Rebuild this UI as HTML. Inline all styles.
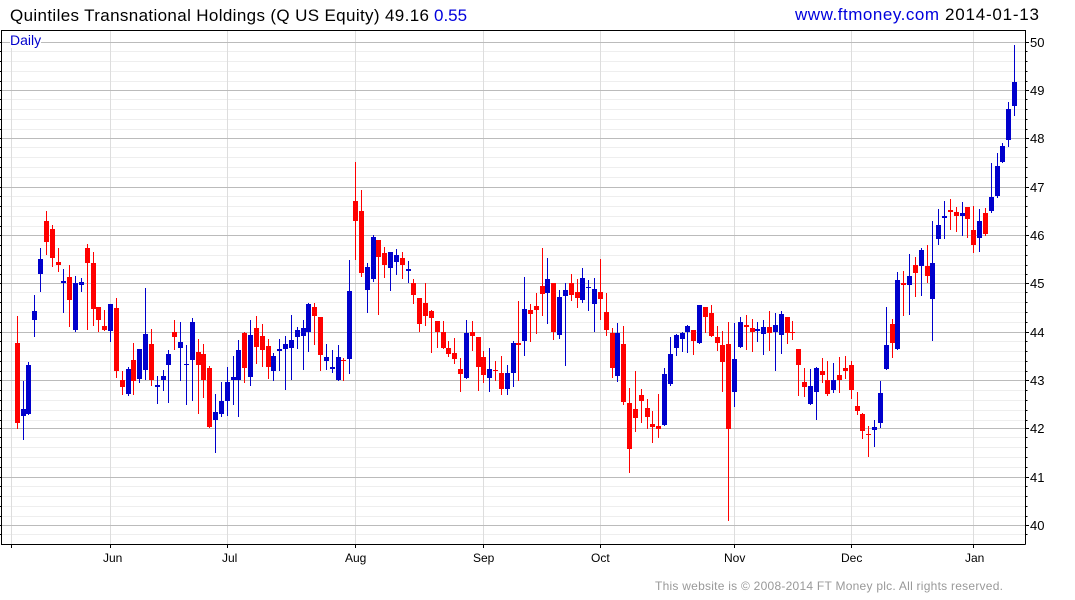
<!DOCTYPE html>
<html>
<head>
<meta charset="utf-8">
<title>Quintiles Transnational Holdings</title>
<style>
html,body{margin:0;padding:0;background:#fff;width:1075px;height:600px;overflow:hidden}
svg{display:block}
text{font-family:"Liberation Sans",Arial,sans-serif;white-space:pre}
.c{shape-rendering:crispEdges;fill:none}
.rw{stroke:#f00;stroke-width:3}
.rb{stroke:#f00;stroke-width:15}
.bw{stroke:#00c;stroke-width:3}
.bb{stroke:#00c;stroke-width:15}
</style>
</head>
<body>
<svg width="1075" height="600" viewBox="0 0 1075 600" xmlns="http://www.w3.org/2000/svg">
<g class="c" stroke-width="1">
<path stroke="#eeeeee" d="M2 51.5H1025M2 61.5H1025M2 71.5H1025M2 81.5H1025M2 99.5H1025M2 109.5H1025M2 119.5H1025M2 129.5H1025M2 147.5H1025M2 157.5H1025M2 167.5H1025M2 177.5H1025M2 196.5H1025M2 206.5H1025M2 216.5H1025M2 226.5H1025M2 245.5H1025M2 255.5H1025M2 265.5H1025M2 274.5H1025M2 292.5H1025M2 302.5H1025M2 312.5H1025M2 322.5H1025M2 341.5H1025M2 351.5H1025M2 361.5H1025M2 371.5H1025M2 390.5H1025M2 400.5H1025M2 410.5H1025M2 420.5H1025M2 437.5H1025M2 447.5H1025M2 457.5H1025M2 467.5H1025M2 486.5H1025M2 496.5H1025M2 506.5H1025M2 516.5H1025M2 534.5H1025"/>
<path stroke="#dddddd" d="M11.5 31V544M110.5 31V544M227.5 31V544M355.5 31V544M483.5 31V544M600.5 31V544M734.5 31V544M851.5 31V544M973.5 31V544"/>
<path stroke="#bbbbbb" d="M2 42.5H1025M2 90.5H1025M2 138.5H1025M2 187.5H1025M2 235.5H1025M2 283.5H1025M2 332.5H1025M2 380.5H1025M2 428.5H1025M2 477.5H1025M2 525.5H1025"/>
</g>
<rect x="10" y="31" width="31" height="17" fill="#fff"/>
<rect x="2" y="31" width="8" height="17" fill="#fff"/>
<path class="c" stroke="#bbbbbb" d="M2 42.5H10"/>

<g transform="translate(0,200) scale(0.33333)">
<path class="c rw" d="M52 348V687M208 195V381M139 33V165M157 75V201M175 144V216M262 132V390M280 156V378M295 321V396M313 330V393M349 294V534M367 513V585M400 429V585M454 387V558M523 360V450M595 417V642M610 432V594M628 498V684"/>
<path class="c rb" d="M52 429V669M208 231V300M139 63V126M157 87V174M175 186V195M262 144V189M280 189V327M295 321V360M313 378V390M349 324V513M367 540V561M400 480V543M454 432V540M523 396V411M595 456V495M610 462V540M628 504V681"/>
<path class="c bw" d="M70 543V720M85 486V645M103 285V411M121 144V276M190 207V339M226 228V396M244 234V276M331 312V426M385 501V588M418 447V549M436 264V540M472 528V612M490 510V573M505 450V609M541 366V543M559 435V615M577 354V603M646 582V759M664 546V651M682 501V648M700 468V615M715 420V651"/>
<path class="c bb" d="M70 627V648M85 495V642M103 333V360M121 177V222M190 243V249M226 249V390M244 246V255M331 312V393M385 507V582M418 447V537M436 402V510M472 555V561M490 528V540M505 462V495M541 426V444M559 492V495M577 366V480M646 636V660M664 603V642M682 546V603M700 531V540M715 450V540"/>
</g>

<g transform="translate(240,150) scale(0.33333)">
<path class="c rw" d="M13 546V699M49 498V642M67 522V651M85 567V687M223 459V585M241 501V663M310 624V693M346 36V330M364 120V381M415 270V495M433 291V384M487 306V387M520 387V462M538 444V546M556 399V528M574 480V609M592 513V594M610 513V597M625 573V621M643 564V642M661 624V726M697 513V603M715 561V723"/>
<path class="c rb" d="M13 549V654M49 534V591M67 558V600M85 588V651M223 471V498M241 501V615M310 630V633M346 153V213M364 183V369M415 270V321M433 309V345M487 324V345M520 399V435M538 444V522M556 459V498M574 483V504M592 513V546M610 546V594M625 594V612M643 609V627M661 657V672M697 546V558M715 561V651"/>
<path class="c bw" d="M31 510V708M100 609V693M118 567V663M136 558V720M154 495V690M172 531V597M190 510V660M205 459V606M259 582V660M277 600V669M295 585V693M328 330V672M382 339V489M400 255V396M451 306V423M469 297V375M505 333V399M679 510V687"/>
<path class="c bb" d="M31 555V681M100 618V663M118 597V603M136 582V597M154 570V594M172 540V561M190 534V558M205 462V546M259 621V633M277 651V657M295 621V690M328 423V627M382 351V420M400 261V387M451 306V354M469 315V336M505 357V363M679 549V684"/>
</g>

<g transform="translate(480,240) scale(0.33333)">
<path class="c rw" d="M10 333V429M46 363V423M64 348V465M115 183V423M151 192V306M169 159V282M187 24V228M220 129V300M274 102V183M292 117V204M361 57V240M379 159V288M397 264V414M430 258V495M448 444V699M466 393V576M484 447V549M502 477V567M517 513V609M535 462V594M640 270V345M676 201V279M694 195V291M712 258V333"/>
<path class="c rb" d="M10 351V405M46 390V393M64 399V447M115 309V315M151 210V222M169 198V210M187 138V162M220 129V276M274 129V165M292 156V174M361 156V177M379 216V270M397 279V384M430 312V486M448 489V627M466 507V534M484 465V483M502 504V531M517 552V561M535 558V567M640 270V303M676 201V231M694 219V288M712 291V309"/>
<path class="c bw" d="M28 324V456M82 375V465M100 303V441M133 111V348M202 54V252M238 150V297M256 129V378M307 84V189M325 120V213M343 114V276M412 249V426M553 384V558M571 291V438M589 282V348M607 276V336M622 255V339M658 195V312"/>
<path class="c bb" d="M28 387V414M82 399V447M100 309V399M133 207V303M202 117V159M238 171V285M256 150V168M307 114V180M325 141V144M343 147V192M412 279V408M553 402V555M571 342V432M589 285V324M607 279V297M622 258V276M658 195V309"/>
</g>

<g transform="translate(700,290) scale(0.33333)">
<path class="c rw" d="M67 123V306M85 96V693M139 75V180M157 87V186M208 63V183M262 81V162M277 93V150M295 177V318M313 234V321M367 204V279M382 213V318M418 201V309M436 198V267M454 213V327M472 306V375M487 369V447M505 408V501"/>
<path class="c rb" d="M67 165V216M85 162V417M139 105V111M157 114V126M208 111V129M262 81V129M277 126V129M295 177V225M313 276V291M367 243V255M382 270V312M418 255V270M436 234V243M454 225V300M472 348V363M487 372V423M505 432V435"/>
<path class="c bw" d="M103 99V351M121 81V174M172 96V156M190 90V195M226 69V243M244 63V192M331 237V345M349 231V390M400 219V309M523 390V471M541 273V414M559 51V240"/>
<path class="c bb" d="M103 207V306M121 96V171M172 117V123M190 111V132M226 105V126M244 72V135M331 288V342M349 234V306M400 270V300M523 411V420M541 309V399M559 165V237"/>
</g>

<g transform="translate(870,30) scale(0.33333)">
<path class="c rw" d="M67 867V984M100 723V858M136 681V801M172 645V759M241 507V600M259 531V606M292 531V624M310 528V669M346 534V618"/>
<path class="c rb" d="M67 882V939M100 759V765M136 705V729M172 708V738M241 540V546M259 546V558M292 531V567M310 600V645M346 549V612"/>
<path class="c bw" d="M82 726V960M118 672V855M154 654V798M187 573V933M205 537V645M223 513V627M277 516V618M328 537V666M364 399V549M382 369V504M397 339V399M415 216V351M433 45V258"/>
<path class="c bb" d="M82 750V957M118 738V765M154 660V708M187 699V807M205 585V627M223 558V564M277 549V558M328 573V624M364 501V543M382 408V498M397 348V396M415 237V330M433 156V228"/>
</g>

<g class="c" stroke="#000" stroke-width="1">
<path d="M1.5 30V544.5M1 30.5H1025.5M1025.5 30V544.5M1 544.5H1025.5"/>
<path d="M0 42.5H1M0 51.5H1M0 61.5H1M0 71.5H1M0 81.5H1M0 90.5H1M0 99.5H1M0 109.5H1M0 119.5H1M0 129.5H1M0 138.5H1M0 147.5H1M0 157.5H1M0 167.5H1M0 177.5H1M0 187.5H1M0 196.5H1M0 206.5H1M0 216.5H1M0 226.5H1M0 235.5H1M0 245.5H1M0 255.5H1M0 265.5H1M0 274.5H1M0 283.5H1M0 292.5H1M0 302.5H1M0 312.5H1M0 322.5H1M0 332.5H1M0 341.5H1M0 351.5H1M0 361.5H1M0 371.5H1M0 380.5H1M0 390.5H1M0 400.5H1M0 410.5H1M0 420.5H1M0 428.5H1M0 437.5H1M0 447.5H1M0 457.5H1M0 467.5H1M0 477.5H1M0 486.5H1M0 496.5H1M0 506.5H1M0 516.5H1M0 525.5H1M0 534.5H1"/>
<path d="M1026 42.5H1029M1026 90.5H1029M1026 138.5H1029M1026 187.5H1029M1026 235.5H1029M1026 283.5H1029M1026 332.5H1029M1026 380.5H1029M1026 428.5H1029M1026 477.5H1029M1026 525.5H1029"/>
<path d="M1026 51.5H1027.5M1026 61.5H1027.5M1026 71.5H1027.5M1026 81.5H1027.5M1026 99.5H1027.5M1026 109.5H1027.5M1026 119.5H1027.5M1026 129.5H1027.5M1026 147.5H1027.5M1026 157.5H1027.5M1026 167.5H1027.5M1026 177.5H1027.5M1026 196.5H1027.5M1026 206.5H1027.5M1026 216.5H1027.5M1026 226.5H1027.5M1026 245.5H1027.5M1026 255.5H1027.5M1026 265.5H1027.5M1026 274.5H1027.5M1026 292.5H1027.5M1026 302.5H1027.5M1026 312.5H1027.5M1026 322.5H1027.5M1026 341.5H1027.5M1026 351.5H1027.5M1026 361.5H1027.5M1026 371.5H1027.5M1026 390.5H1027.5M1026 400.5H1027.5M1026 410.5H1027.5M1026 420.5H1027.5M1026 437.5H1027.5M1026 447.5H1027.5M1026 457.5H1027.5M1026 467.5H1027.5M1026 486.5H1027.5M1026 496.5H1027.5M1026 506.5H1027.5M1026 516.5H1027.5M1026 534.5H1027.5"/>
<path d="M11.5 545V548M110.5 545V548M227.5 545V548M355.5 545V548M483.5 545V548M600.5 545V548M734.5 545V548M851.5 545V548M973.5 545V548"/>
</g>

<text x="10" y="21" font-size="17" fill="#000" textLength="419" lengthAdjust="spacing">Quintiles Transnational Holdings (Q US Equity) 49.16</text>
<text x="434" y="21" font-size="17" fill="#0000dd">0.55</text>
<text x="795" y="20" font-size="17" fill="#0000dd" textLength="144" lengthAdjust="spacing">www.ftmoney.com</text>
<text x="945" y="20" font-size="17" fill="#000" textLength="94" lengthAdjust="spacing">2014-01-13</text>
<text x="10" y="45" font-size="14" fill="#0000cc">Daily</text>

<g font-size="13" fill="#000">
<text x="1030" y="47">50</text>
<text x="1030" y="95">49</text>
<text x="1030" y="143">48</text>
<text x="1030" y="192">47</text>
<text x="1030" y="240">46</text>
<text x="1030" y="288">45</text>
<text x="1030" y="337">44</text>
<text x="1030" y="385">43</text>
<text x="1030" y="433">42</text>
<text x="1030" y="482">41</text>
<text x="1030" y="530">40</text>
</g>
<g font-size="12" fill="#000">
<text x="103" y="562">Jun</text>
<text x="222" y="562">Jul</text>
<text x="345" y="562">Aug</text>
<text x="473" y="562">Sep</text>
<text x="591" y="562">Oct</text>
<text x="724" y="562">Nov</text>
<text x="841" y="562">Dec</text>
<text x="965" y="562">Jan</text>
</g>
<text x="655" y="590" font-size="12" fill="#999999" textLength="348" lengthAdjust="spacing">This website is © 2008-2014 FT Money plc. All rights reserved.</text>
</svg>
</body>
</html>
